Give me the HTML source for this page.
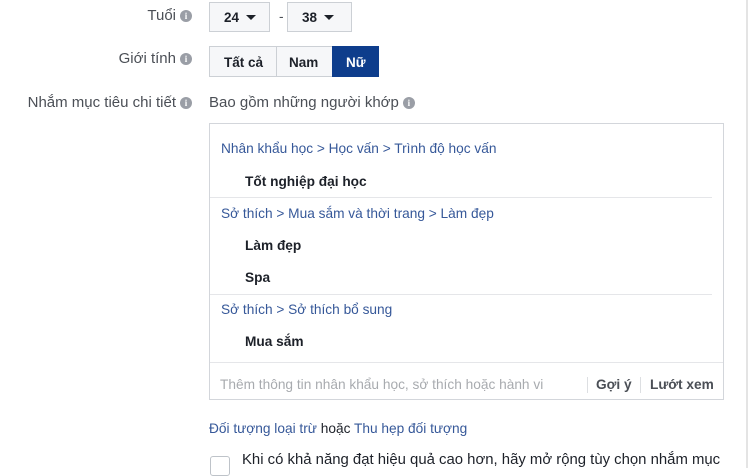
<!DOCTYPE html>
<html><head><meta charset="utf-8"><style>
body{margin:0;width:750px;height:468px;background:#fff;font-family:"Liberation Sans",Arial,sans-serif;font-size:13.7px;color:#4b4f56;position:relative;overflow:hidden}
.a{position:absolute;white-space:nowrap}
.lbl{right:558px;text-align:right;color:#4b4f56;font-size:15px}
.i{display:inline-block;width:12px;height:12px;border-radius:50%;background:#9a9ea6;color:#fff;font-size:9px;font-weight:bold;text-align:center;line-height:12px;vertical-align:1px;margin-left:4px;font-family:"Liberation Serif",serif}
.box{position:absolute;border:1px solid #ccd0d5;background:#f6f7f9;box-sizing:border-box;font-weight:bold;color:#1d2129;font-size:13.5px}
.tri{display:inline-block;width:0;height:0;border-left:5px solid transparent;border-right:5px solid transparent;border-top:5px solid #1d2129;vertical-align:2px;margin-left:7px}
.bc{color:#365899;left:221px}
.it{left:245px;font-weight:bold;color:#1d2129}
.sep{position:absolute;left:210px;width:502px;height:1px;background:#e5e6e9}
</style></head><body>
<div class="a lbl" style="top:7px">Tuổi<span class="i">i</span></div>
<div class="box" style="left:209px;top:2px;width:61px;height:30px;padding:7px 0 0 14px">24<span class="tri"></span></div>
<div class="a" style="left:279px;top:9px">-</div>
<div class="box" style="left:287px;top:2px;width:65px;height:30px;padding:7px 0 0 14px">38<span class="tri"></span></div>

<div class="a lbl" style="top:50px">Giới tính<span class="i">i</span></div>
<div class="box" style="left:209px;top:46px;width:68px;height:31px;padding:8px 0 0 14px">Tất cả</div>
<div class="box" style="left:276px;top:46px;width:57px;height:31px;padding:8px 0 0 12px">Nam</div>
<div class="box" style="left:332px;top:46px;width:47px;height:31px;padding:8px 0 0 13px;background:#0e3d8c;border-color:#0e3d8c;color:#fff">Nữ</div>

<div class="a lbl" style="top:94px">Nhắm mục tiêu chi tiết<span class="i">i</span></div>
<div class="a" style="left:209px;top:94px;font-size:15px">Bao gồm những người khớp<span class="i">i</span></div>

<div style="position:absolute;left:209px;top:123px;width:515px;height:277px;border:1px solid #d3d6db;box-sizing:border-box"></div>
<div class="a bc" style="top:141px">Nhân khẩu học &gt; Học vấn &gt; Trình độ học vấn</div>
<div class="a it" style="top:174px">Tốt nghiệp đại học</div>
<div class="sep" style="top:197px"></div>
<div class="a bc" style="top:206px">Sở thích &gt; Mua sắm và thời trang &gt; Làm đẹp</div>
<div class="a it" style="top:238px">Làm đẹp</div>
<div class="a it" style="top:270px">Spa</div>
<div class="sep" style="top:294px"></div>
<div class="a bc" style="top:302px">Sở thích &gt; Sở thích bổ sung</div>
<div class="a it" style="top:334px">Mua sắm</div>
<div style="position:absolute;left:210px;top:362px;width:513px;height:1px;background:#e5e6e9"></div>
<div class="a" style="left:220px;top:377px;color:#a8abaf">Thêm thông tin nhân khẩu học, sở thích hoặc hành vi</div>
<div style="position:absolute;left:587px;top:377px;width:1px;height:16px;background:#dddfe2"></div>
<div class="a" style="left:596px;top:377px;font-weight:bold;color:#4b4f56">Gợi ý</div>
<div style="position:absolute;left:640px;top:377px;width:1px;height:16px;background:#dddfe2"></div>
<div class="a" style="left:650px;top:377px;font-weight:bold;color:#4b4f56">Lướt xem</div>

<div class="a" style="left:209px;top:421px;color:#1d2129"><span style="color:#365899">Đối tượng loại trừ</span> hoặc <span style="color:#365899">Thu hẹp đối tượng</span></div>
<div style="position:absolute;left:210px;top:456px;width:20px;height:20px;border:1px solid #bec3c9;border-radius:3px;box-sizing:border-box"></div>
<div class="a" style="left:242px;top:452px;font-size:14.9px;color:#1d2129">Khi có khả năng đạt hiệu quả cao hơn, hãy mở rộng tùy chọn nhắm mục</div>
<div style="position:absolute;left:746px;top:0;width:2px;height:468px;background:#e4e4e4"></div>
</body></html>
